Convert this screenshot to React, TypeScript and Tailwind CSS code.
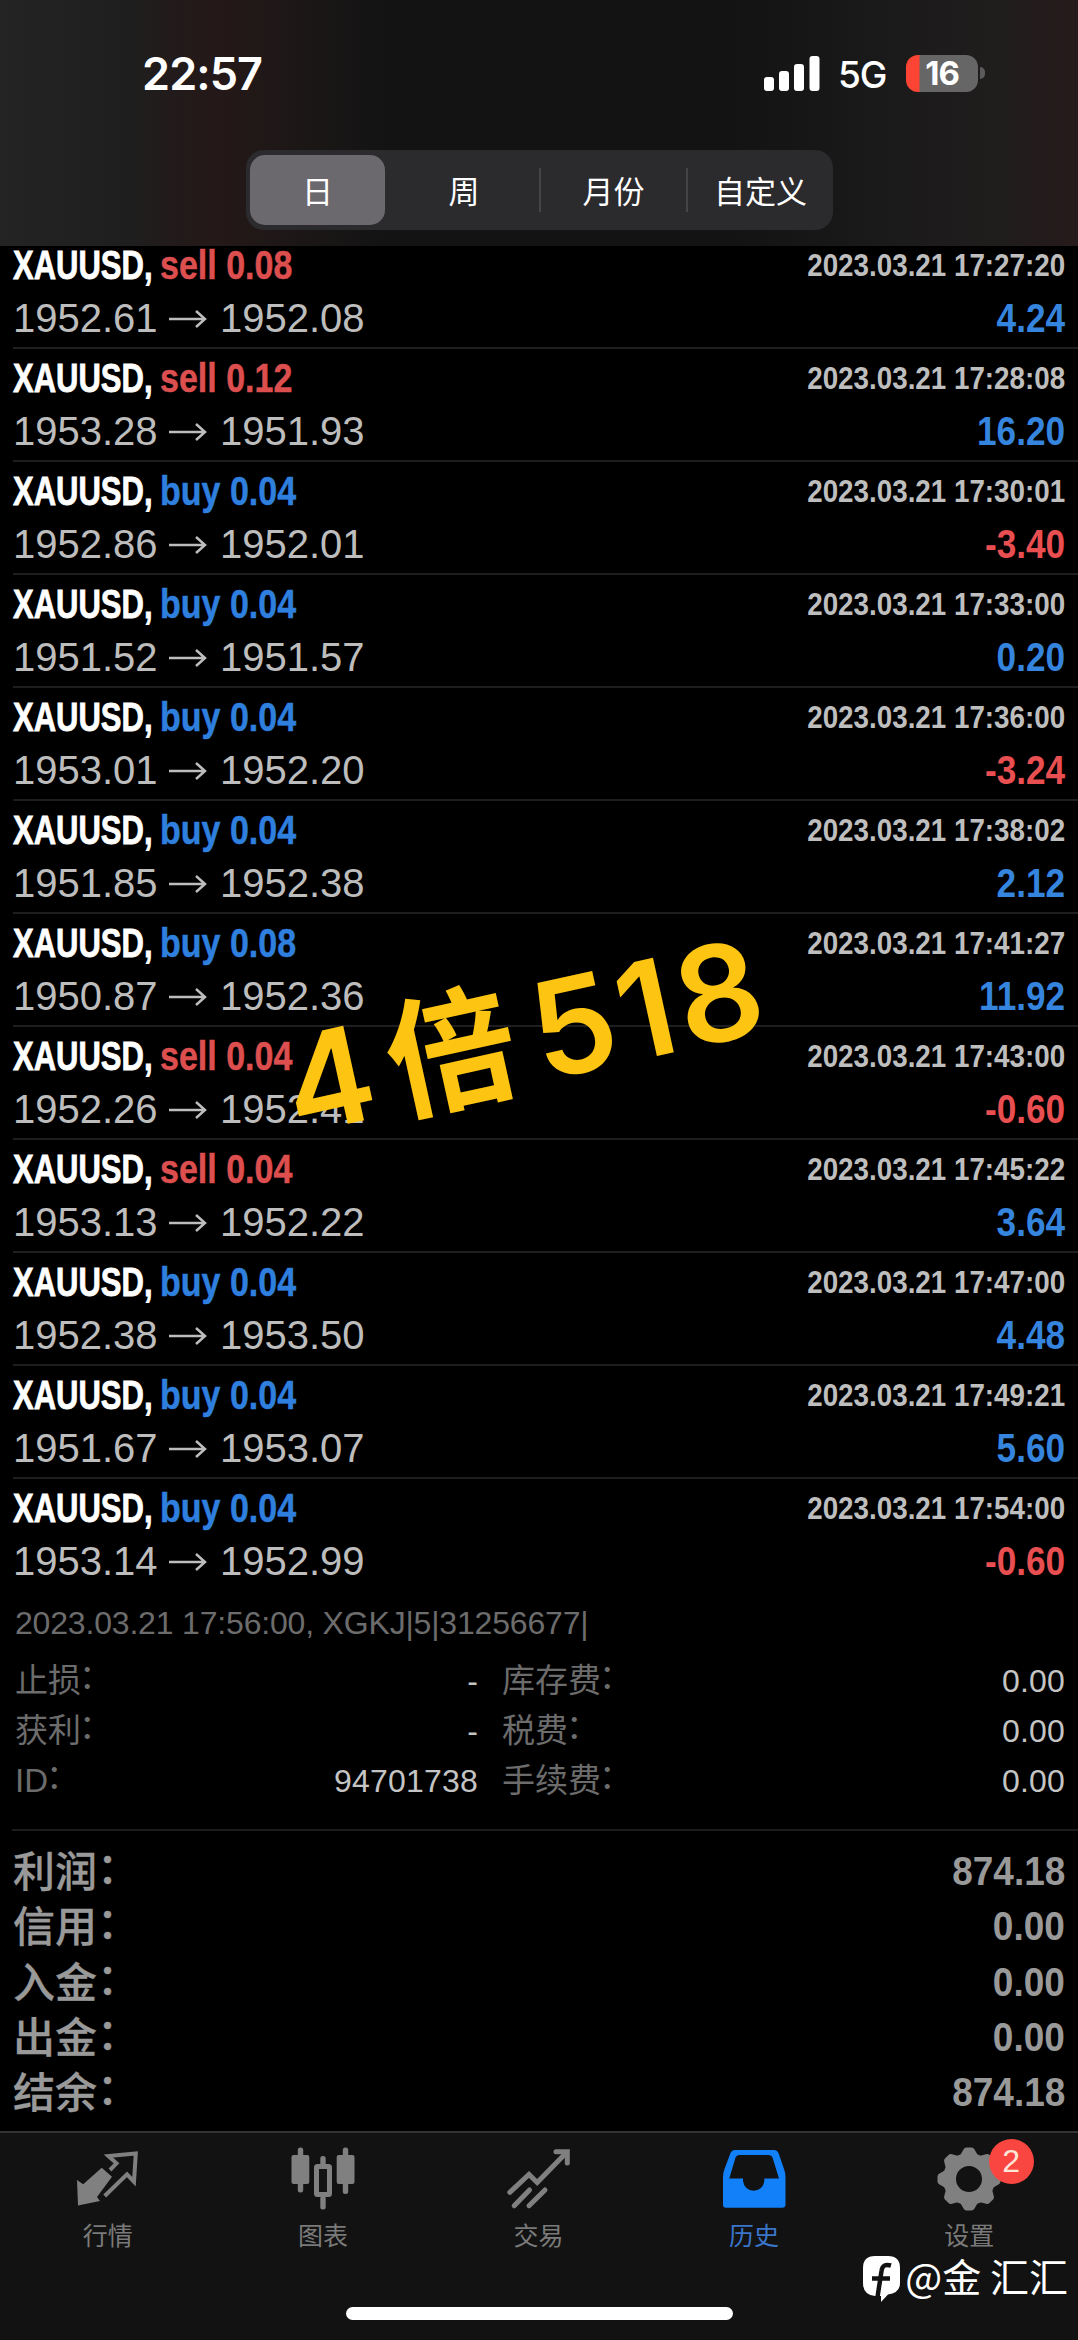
import clsx from "clsx";

type Deal = {
  side: "buy" | "sell";
  volume: string;
  open: string;
  close: string;
  time: string;
  profit: string;
};

const deals: Deal[] = [
  { side: "sell", volume: "0.08", open: "1952.61", close: "1952.08", time: "17:27:20", profit: "4.24" },
  { side: "sell", volume: "0.12", open: "1953.28", close: "1951.93", time: "17:28:08", profit: "16.20" },
  { side: "buy", volume: "0.04", open: "1952.86", close: "1952.01", time: "17:30:01", profit: "-3.40" },
  { side: "buy", volume: "0.04", open: "1951.52", close: "1951.57", time: "17:33:00", profit: "0.20" },
  { side: "buy", volume: "0.04", open: "1953.01", close: "1952.20", time: "17:36:00", profit: "-3.24" },
  { side: "buy", volume: "0.04", open: "1951.85", close: "1952.38", time: "17:38:02", profit: "2.12" },
  { side: "buy", volume: "0.08", open: "1950.87", close: "1952.36", time: "17:41:27", profit: "11.92" },
  { side: "sell", volume: "0.04", open: "1952.26", close: "1952.41", time: "17:43:00", profit: "-0.60" },
  { side: "sell", volume: "0.04", open: "1953.13", close: "1952.22", time: "17:45:22", profit: "3.64" },
  { side: "buy", volume: "0.04", open: "1952.38", close: "1953.50", time: "17:47:00", profit: "4.48" },
  { side: "buy", volume: "0.04", open: "1951.67", close: "1953.07", time: "17:49:21", profit: "5.60" },
  { side: "buy", volume: "0.04", open: "1953.14", close: "1952.99", time: "17:54:00", profit: "-0.60" },
];

const details = [
  { label: "止损", value: "-", label2: "库存费", value2: "0.00" },
  { label: "获利", value: "-", label2: "税费", value2: "0.00" },
  { label: "ID", value: "94701738", label2: "手续费", value2: "0.00" },
];

const totals = [
  { label: "利润", value: "874.18" },
  { label: "信用", value: "0.00" },
  { label: "入金", value: "0.00" },
  { label: "出金", value: "0.00" },
  { label: "结余", value: "874.18" },
];

const StatusBar = () => {
  return (
    <div className="flex h-[150px] items-start justify-between pl-[142px] pr-[93px] pt-[46px] font-['Inter',sans-serif] text-white">
      <span className="pt-px text-[45px] font-semibold leading-[54px] tracking-[-0.9px]">22:57</span>
      <div className="flex items-center pt-[7px]">
        <svg width="56" height="36" viewBox="0 0 56 36" fill="#fff">
          <rect x="0" y="22" width="10" height="14" rx="3" />
          <rect x="15" y="16" width="10" height="20" rx="3" />
          <rect x="30" y="9" width="10" height="27" rx="3" />
          <rect x="45.500" y="1" width="10" height="35" rx="3" />
        </svg>
        <span className="ml-[18px] w-[68px] pt-[3px] text-[37px] font-medium leading-[37px] tracking-[-1px]">
          5G
        </span>
        <div className="flex h-[37px] w-[72px] items-center justify-center rounded-xl bg-[linear-gradient(90deg,#fb4434_13px,#676667_14px)]">
          <span className="text-[33px] font-bold leading-[37px] tracking-[-1px]">
            16
          </span>
        </div>
        <div className="ml-[2px] h-3 w-[5px] rounded-r-full bg-[#5c5b5c]" />
      </div>
    </div>
  );
};

const PeriodTabs = () => {
  return (
    <div className="ml-[246px] flex h-20 w-[587px] items-center rounded-[18px] bg-[#2b2a2d] p-1 font-['Noto_Sans_CJK_SC',sans-serif] text-[31px] text-white">
      <div className="flex h-[70px] w-[135px] items-center justify-center rounded-[15px] bg-[#6b696d]">
        日
      </div>
      <div className="flex h-11 w-[156px] items-center justify-center border-r-2 border-[#454447] pl-1">
        周
      </div>
      <div className="flex h-11 w-[147px] items-center justify-center border-r-2 border-[#454447]">
        月份
      </div>
      <div className="flex h-11 flex-1 items-center justify-center pl-1">
        自定义
      </div>
    </div>
  );
};

const DealRow = ({ deal, last }: { deal: Deal; last: boolean }) => {
  return (
    <div
      className={clsx(
        "ml-[13px] flex h-[113px] shrink-0 justify-between border-b-2 pr-[13px] pt-[3px] leading-[53px]",
        last ? "border-transparent" : "border-[#1e1e1e]"
      )}
    >
      <div>
        <div className="flex h-[53px] whitespace-pre text-[40px] font-bold">
          <span className="w-[147px] origin-left scale-x-[0.775] text-white [-webkit-text-stroke:0.8px_#fff]">
            XAUUSD,
          </span>
          <span
            className={clsx(
              "origin-left scale-x-[0.85]",
              deal.side === "buy"
                ? "text-[#2f7fde] [-webkit-text-stroke:0.5px_#2f7fde]"
                : "text-[#dd4f4f] [-webkit-text-stroke:0.5px_#dd4f4f]"
            )}
          >
            {deal.side} {deal.volume}
          </span>
        </div>
        <div className="flex h-[53px] items-center text-[40px] text-[#bdbdbd]">
          <span className="w-[156px]">{deal.open}</span>
          <svg width="38" height="18" viewBox="0 0 38 18" fill="none" stroke="#bdbdbd" strokeWidth="2.5">
            <path d="M0 9h36M27 1l9 8-9 8" />
          </svg>
          <span className="ml-[13px]">{deal.close}</span>
        </div>
      </div>
      <div className="text-right font-bold">
        <div className="h-[53px] origin-right scale-x-[0.868] text-[32px] text-[#bebebe]">
          2023.03.21 {deal.time}
        </div>
        <div
          className={clsx(
            "h-[53px] origin-right scale-x-[0.88] text-[40px]",
            deal.profit.startsWith("-") ? "text-[#e94f50]" : "text-[#3584dd]"
          )}
        >
          {deal.profit}
        </div>
      </div>
    </div>
  );
};

const Colon = () => <span className="relative -left-[2px] -top-1">：</span>;

const DealDetails = () => {
  return (
    <div className="ml-3 h-[239px] border-b-2 border-[#1c1c1c] pl-[3px] pr-[13px] pt-[6px] text-[32px] text-[#6c6c6c]">
      <div className="h-[58px] whitespace-pre leading-[50px] tracking-[-0.18px]">
        2023.03.21 17:56:00, XGKJ|5|31256677|
      </div>
      {details.map((item) => (
        <div key={item.label} className="flex h-[50px] leading-[50px]">
          <span className="text-[33px]">
            {item.label}
            <Colon />
          </span>
          <span className="flex-1 text-right tracking-[0.2px] text-[#c4c4c4]">{item.value}</span>
          <span className="ml-6 w-[300px] text-[33px]">
            {item.label2}
            <Colon />
          </span>
          <span className="w-[263px] text-right tracking-[0.2px] text-[#c4c4c4]">{item.value2}</span>
        </div>
      ))}
    </div>
  );
};

const Totals = () => {
  return (
    <div className="flex-1 pl-[13px] pr-[13px] pt-[13px]">
      {totals.map((item) => (
        <div key={item.label} className="flex h-[55.300px] items-start justify-between text-[#999]">
          <span className="-mt-[3px] font-['Noto_Sans_CJK_SC',sans-serif] text-[42px] font-medium leading-[55px] [-webkit-text-stroke:0.3px_#999]">
            {item.label}
            <span className="relative -top-1">：</span>
          </span>
          <span className="origin-right scale-x-[0.925] text-[40px] font-bold leading-[55px]">
            {item.value}
          </span>
        </div>
      ))}
    </div>
  );
};

const QuotesIcon = () => (
  <svg width="64" height="64" viewBox="0 0 64 64" fill="none">
    <path d="M25.700 20.700 36 29.700 21 50 24 54 2 58.500 1 33 7.200 37.300Z" fill="#808080" />
    <path
      d="M34 23 40.500 16.300 32.400 9 59.800 6.500 58 34.700 51 27.300 28.700 49"
      stroke="#808080"
      strokeWidth="4"
    />
  </svg>
);

const ChartIcon = () => (
  <svg width="64" height="64" viewBox="0 0 64 64" fill="#808080">
    <rect x="0.500" y="8" width="17.800" height="29" rx="2" />
    <rect x="6.800" y="0.500" width="5.400" height="45" rx="2.500" />
    <rect x="25.500" y="19.500" width="13" height="28" rx="1" fill="none" stroke="#808080" strokeWidth="5" />
    <rect x="29.300" y="9" width="5.400" height="10" rx="2.500" />
    <rect x="29.300" y="49" width="5.400" height="13.500" rx="2.500" />
    <rect x="45.700" y="8" width="17.800" height="29" rx="2" />
    <rect x="51.800" y="0.500" width="5.400" height="46.500" rx="2.500" />
  </svg>
);

const TradeIcon = () => (
  <svg width="64" height="64" viewBox="0 0 64 64" fill="none" stroke="#808080" strokeWidth="5">
    <path d="M2.800 45.300 22 27.500 30.200 35.500 59 6" strokeLinecap="round" />
    <path d="M49 4.700H60.300V16" strokeLinecap="round" />
    <path d="M7.200 58.700 22.500 43M22 58.700 38 43" strokeLinecap="round" />
  </svg>
);

const HistoryIcon = () => (
  <svg width="64" height="64" viewBox="0 0 64 64" fill="#1280f8">
    <path
      fillRule="evenodd"
      d="M13 3H52Q55 3 56.500 6L62 22Q63.500 26 63.500 30V57.500Q63.500 60.700 60 60.700H4Q1 60.700 1 57.500V30Q1 26 2.500 22L8.500 6Q10 3 13 3ZM17 8Q14.500 8 13.500 10.500L7.300 31.500H21V34A10.700 10.700 0 0 0 42.300 34V31.500H57L50.500 10.500Q49.500 8 47 8Z"
    />
  </svg>
);

const SettingsIcon = () => (
  <svg width="64" height="64" viewBox="0 0 64 64">
    <circle cx="32" cy="32" r="19.500" fill="none" stroke="#808080" strokeWidth="13" />
    {[0, 45, 90, 135, 180, 225, 270, 315].map((angle) => (
      <path
        key={angle}
        d="M23 8.500 26.500 2.500Q27.500 0.500 29.500 0.500H34.500Q36.500 0.500 37.500 2.500L41 8.500Z"
        fill="#808080"
        transform={`rotate(${angle} 32 32)`}
      />
    ))}
  </svg>
);

const navItems = [
  { label: "行情", icon: <QuotesIcon /> },
  { label: "图表", icon: <ChartIcon /> },
  { label: "交易", icon: <TradeIcon /> },
  { label: "历史", icon: <HistoryIcon />, active: true },
  { label: "设置", icon: <SettingsIcon />, badge: "2" },
];

const BottomNav = () => {
  return (
    <div className="relative flex h-[209px] flex-col justify-between border-t-2 border-[#333] bg-[#121212] pb-5 font-['Noto_Sans_CJK_SC',sans-serif]">
      <div className="flex pr-px pt-[14px]">
        {navItems.map((item) => (
          <div
            key={item.label}
            className={clsx(
              "relative flex flex-1 flex-col items-center text-[25px] leading-9",
              item.active ? "text-[#3a75c9]" : "text-[#7a7a7a]"
            )}
          >
            {item.icon}
            <span className="mt-[5px]">{item.label}</span>
            {item.badge && (
              <span className="absolute left-[127px] top-[-8px] h-[45px] w-[45px] rounded-full bg-[#f94640] text-center font-['Liberation_Sans',sans-serif] text-[32px] leading-[45px] text-[#ffe4d8]">
                {item.badge}
              </span>
            )}
          </div>
        ))}
      </div>
      <div className="mx-auto h-[13px] w-[387px] rounded-full bg-white" />

      {/* author signature over the bar */}
      <div className="absolute right-[10px] top-[115px] flex items-center text-[39px] leading-[52px] text-white">
        <svg width="38" height="46" viewBox="0 0 38 46" className="mr-1 mt-2">
          <path d="M12 0H25Q37 0 37 12V27Q37 37 25 38.500L18 46V40H12Q0 39 0 27V12Q0 0 12 0Z" fill="#fff" />
          <path
            d="M28 9.500Q19.500 7 18.500 15L14.500 41M9 22.500H27"
            fill="none"
            stroke="#121212"
            strokeWidth="4.500"
          />
        </svg>
        <span className="whitespace-pre">@金 汇汇</span>
      </div>
    </div>
  );
};

const App = () => {
  return (
    <div className="relative flex h-[2340px] w-[1078px] flex-col overflow-hidden bg-black font-['Liberation_Sans','Noto_Sans_CJK_SC',sans-serif]">
      <div className="h-[246px] shrink-0 bg-[linear-gradient(90deg,#242424_0%,#1f1e1e_12%,#251818_20%,#1c1717_28%,#131313_36%,#131313_68%,#1b1a1a_82%,#201d1d_93%,#271a1b_100%)]">
        <StatusBar />
        <PeriodTabs />
      </div>

      {/* the list is scrolled a little under the header */}
      <div className="flex h-[1346px] shrink-0 flex-col justify-end overflow-hidden">
        {deals.map((deal, index) => (
          <DealRow key={deal.time} deal={deal} last={index === deals.length - 1} />
        ))}
      </div>
      <DealDetails />
      <Totals />
      <BottomNav />

      {/* sticker */}
      <div className="absolute left-[279px] top-[947px] flex origin-center -rotate-[12.400deg] items-baseline font-['Inter',sans-serif] text-[133px] font-semibold leading-[160px] text-[#fdc512]">
        <span>4</span>
        <span className="ml-4 font-['Noto_Sans_CJK_SC',sans-serif] text-[130px] font-bold leading-[160px]">
          倍
        </span>
        <span className="ml-[18px] tracking-[4px]">518</span>
      </div>
    </div>
  );
};

export default App;
